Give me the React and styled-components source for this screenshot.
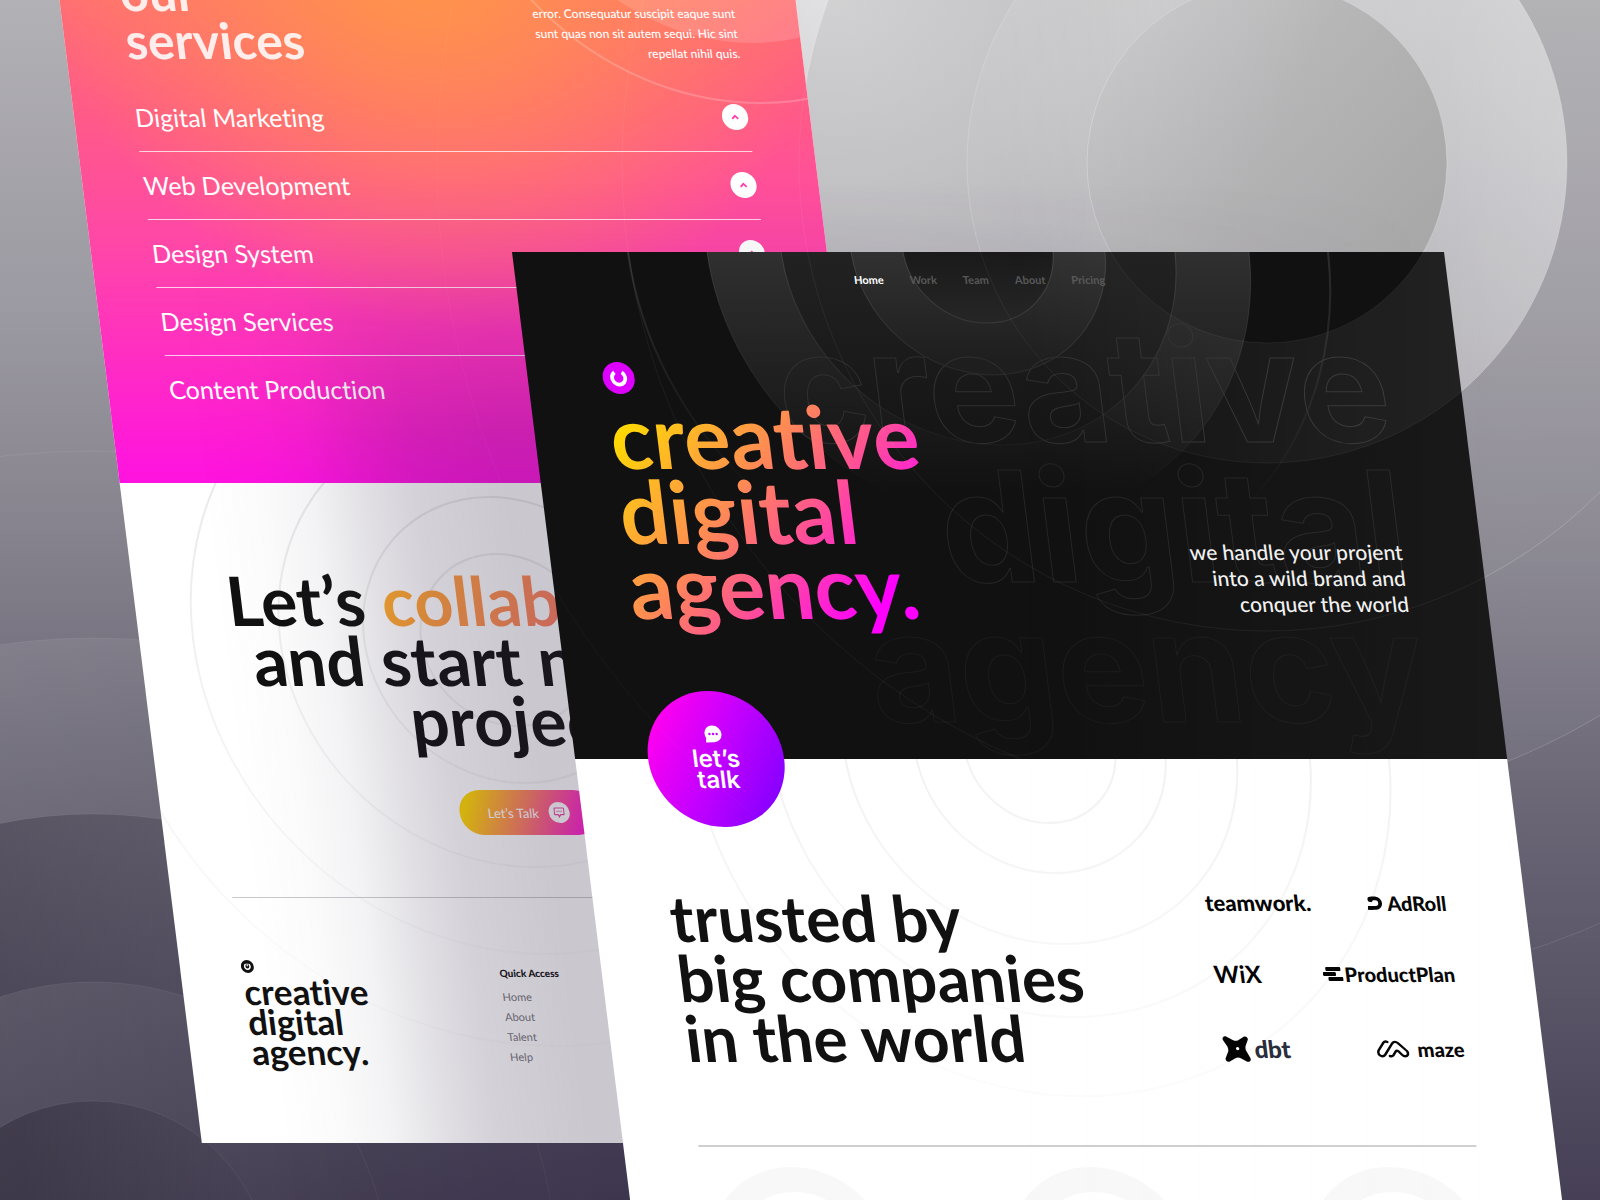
import React from "react";
import styled, { createGlobalStyle } from "styled-components";

const BODY_FONT = `Lato, "Open Sans", sans-serif`;
const GROTESK = `Inter, "Liberation Sans", sans-serif`;
const SLANT = "7.1deg";
const INK = "#111111";

const GlobalStyle = createGlobalStyle`
  *, *::before, *::after { box-sizing: border-box; }
  body {
    margin: 0;
    font-family: ${BODY_FONT};
    font-variant-ligatures: none;
    color: ${INK};
    background: #474056;
  }
  h1, h2, p, ul { margin: 0; padding: 0; }
  ul { list-style: none; }
  a { color: inherit; text-decoration: none; }
  button { font: inherit; border: 0; padding: 0; cursor: pointer; }
`;

const Scene = styled.main`
  position: relative;
  min-height: 100vh;
  overflow: hidden;
  background:
    radial-gradient(circle at 52% 0%, rgba(255, 255, 255, 0.6), rgba(255, 255, 255, 0) 42%),
    linear-gradient(180deg, #b2b1b5 0%, #9c9aa2 25%, #85828d 45%, #676372 66%, #4d485c 88%, #403950 100%);
`;

const SceneArt = styled.svg`
  position: absolute;
  inset: 0;
  width: 100%;
  height: 100%;
  pointer-events: none;
`;

const Sheet = styled.article`
  position: absolute;
  transform: skewX(${SLANT});
  transform-origin: 0 0;
`;

const BackSheet = styled(Sheet)`
  top: -60px;
  left: 52px;
  width: 46%;
  background: #ffffff;
`;

const FrontSheet = styled(Sheet)`
  top: 252px;
  left: 32%;
  width: calc(58% + 4px);

  &::before {
    content: "";
    position: absolute;
    z-index: -1;
    top: -70px;
    bottom: -100px;
    left: -340px;
    right: 0;
    background: linear-gradient(
      90deg,
      rgba(50, 40, 70, 0),
      rgba(50, 40, 70, 0.02) 60px,
      rgba(50, 40, 70, 0.06) 110px,
      rgba(50, 40, 70, 0.15) 165px,
      rgba(50, 40, 70, 0.21) 215px,
      rgba(50, 40, 70, 0.26) 306px,
      rgba(50, 40, 70, 0.26) 50%,
      rgba(50, 40, 70, 0)
    );
    mask-image: linear-gradient(180deg, transparent, rgba(0, 0, 0, 0.2) 80px, #000 250px);
  }
`;

const SheetArt = styled.svg`
  position: absolute;
  top: ${(p) => p.$top || "0"};
  left: 50%;
  margin-left: -500px;
  width: 1000px;
  height: 1000px;
  overflow: visible;
  pointer-events: none;
`;

/* services */

const Services = styled.section`
  position: relative;
  overflow: hidden;
  padding: 28px 62px 59px 61px;
  color: #ffffff;
  background:
    radial-gradient(circle at 50% 0%, rgba(255, 146, 76, 1) 8%, rgba(255, 146, 76, 0) 60%),
    linear-gradient(180deg, #ff7270 6%, #ff5a88 32%, #ff48a6 55%, #ff2cc4 78%, #ff12e0 100%);
`;

const CornerArt = styled.svg`
  position: absolute;
  top: 0;
  right: 0;
  width: 400px;
  height: 240px;
  overflow: visible;
`;

const ServicesHead = styled.header`
  position: relative;
  display: flex;
  justify-content: space-between;
  align-items: flex-end;
  margin-bottom: 20px;
`;

const ServicesTitle = styled.h2`
  font-size: 50px;
  line-height: 48px;
  font-weight: 700;
  color: rgba(255, 255, 255, 0.87);
`;

const ServicesNote = styled.p`
  font-size: 12px;
  line-height: 20px;
  font-weight: 500;
  text-align: right;
  color: #ffffff;
`;

const ServiceRow = styled.li`
  display: flex;
  justify-content: space-between;
  align-items: center;
  height: 68px;
  padding-bottom: 2px;
  font-size: 25px;
  line-height: 32px;
  border-bottom: 1px solid rgba(255, 255, 255, 0.75);
  &:last-child { border-bottom: 0; }
`;

const Toggle = styled.button`
  display: grid;
  place-items: center;
  width: 26px;
  height: 26px;
  border-radius: 50%;
  background: #ffffff;
  color: #ff3fae;
`;

/* collaborate */

const LightArea = styled.div`
  position: relative;
  overflow: hidden;
`;

const Collaborate = styled.section`
  position: relative;
  display: flex;
  flex-direction: column;
  align-items: center;
  margin: 0 61px;
  padding: 87px 0 62px;
  border-bottom: 1px solid #c9c9cc;
`;

const BigTitle = styled.h2`
  font-size: ${(p) => (p.$centered ? "68px" : "64px")};
  line-height: 60px;
  font-weight: 700;
  white-space: nowrap;
  text-align: ${(p) => (p.$centered ? "center" : "left")};
`;

const Glow = styled.span`
  color: transparent;
  background: linear-gradient(115deg, #ffb024, #ff7a6a 60%, #ff2fc0);
  -webkit-background-clip: text;
  background-clip: text;
`;

const TalkButton = styled.button`
  display: flex;
  align-items: center;
  gap: 10px;
  height: 45px;
  margin-top: 40px;
  padding: 0 28px;
  border-radius: 22px;
  font-size: 13px;
  color: #ffffff;
  background: linear-gradient(110deg, #ffd800 8%, #ff7a6a 50%, #ff20d0 88%);
`;

const TalkDot = styled.span`
  display: grid;
  place-items: center;
  width: 21px;
  height: 21px;
  border-radius: 50%;
  background: #ffffff;
  color: #f04aa8;
`;

const Footer = styled.footer`
  position: relative;
  display: grid;
  grid-template-columns: 42% 1fr;
  margin: 0 61px;
  padding: 62px 0 76px;
`;

const FooterBrand = styled.p`
  margin-top: 3px;
  font-size: 35px;
  line-height: 30px;
  font-weight: 700;
`;

const QuickAccess = styled.nav`
  padding-top: 5px;
  font-size: 11px;
  line-height: 20px;
  color: #77767c;
`;

const QuickTitle = styled.p`
  margin-bottom: 6px;
  font-size: 10px;
  line-height: 16px;
  font-weight: 900;
  color: ${INK};
`;

/* hero */

const Hero = styled.section`
  position: relative;
  padding: 0 79px 136px 75px;
  background: ${INK};
  color: #ffffff;
`;

const HeroArt = styled.div`
  position: absolute;
  inset: 0;
  overflow: hidden;
`;

const GhostWords = styled.p`
  position: absolute;
  top: 64px;
  right: 72px;
  font-family: ${GROTESK};
  font-size: 154px;
  line-height: 140px;
  font-weight: 700;
  text-align: right;
  color: transparent;
`;

const GhostLine = styled.span`
  display: block;
  -webkit-text-stroke: 1px ${(p) => p.$tone};
`;

const TopNav = styled.nav`
  position: relative;
  display: flex;
  justify-content: center;
  gap: 26px;
  padding-top: 18px;
  margin-bottom: 72px;
  font-size: 11px;
  line-height: 20px;
  font-weight: 700;
`;

const TopLink = styled.a`
  color: ${(p) => (p.$active ? "#ffffff" : "#585858")};
`;

const HeroBody = styled.div`
  position: relative;
  display: flex;
  justify-content: space-between;
  align-items: flex-end;
`;

const HeroTitle = styled.h1`
  margin: 4px 0 -20px;
  padding-bottom: 20px;
  font-size: 87px;
  line-height: 75px;
  font-weight: 700;
  color: transparent;
  background: linear-gradient(130deg, #ffdc00 6%, #ff8c52 38%, #ff5590 56%, #ff00ff 82%);
  -webkit-background-clip: text;
  background-clip: text;
`;

const HeroNote = styled.p`
  padding-bottom: 6px;
  font-size: 21px;
  line-height: 26px;
  font-weight: 500;
  text-align: right;
  color: #f2f2f2;
`;

const TalkBadge = styled.button`
  position: absolute;
  z-index: 1;
  left: 73px;
  bottom: -68px;
  display: flex;
  flex-direction: column;
  align-items: center;
  justify-content: center;
  gap: 5px;
  width: 136px;
  height: 136px;
  padding-bottom: 4px;
  border-radius: 50%;
  color: #ffffff;
  background: linear-gradient(120deg, #ff00f0 12%, #c400ff 50%, #8a00ff 86%);
`;

const BadgeText = styled.span`
  font-family: ${GROTESK};
  font-size: 24px;
  line-height: 21px;
  font-weight: 600;
`;

/* trusted */

const Trusted = styled.section`
  position: relative;
  overflow: hidden;
  padding: 0 79px 0 75px;
  background: #ffffff;
`;

const TrustedRow = styled.div`
  position: relative;
  display: flex;
  justify-content: space-between;
  align-items: flex-start;
  padding: 129px 0 77px;
  border-bottom: 2px solid #cfcfcf;
`;

const LogoWall = styled.ul`
  display: flex;
  flex-direction: column;
  gap: 41px;
  width: 241px;
`;

const LogoLine = styled.li`
  display: flex;
  justify-content: space-between;
  align-items: center;
  height: 30px;
  &:last-child { height: 38px; }
`;

const Logo = styled.a`
  display: flex;
  align-items: center;
  gap: ${(p) => p.$gap || "4px"};
  font-size: ${(p) => p.$size || "20px"};
  line-height: 24px;
  font-weight: ${(p) => p.$weight || 900};
  color: ${(p) => p.$tone || "#000000"};
`;

const RingRow = styled.div`
  display: flex;
  justify-content: space-between;
  height: 54px;
  padding-top: 20px;
`;

const Ring = styled.span`
  width: 180px;
  height: 180px;
  border-radius: 50%;
  border: 25px solid #f8f8f8;
`;

function SceneCircles() {
  return (
    <SceneArt viewBox="0 0 1600 1200" preserveAspectRatio="xMidYMid slice" aria-hidden="true">
      <defs>
        <linearGradient id="inner" x1="0" y1="0.2" x2="1" y2="0.7">
          <stop offset="0" stopColor="#b8b8b8" stopOpacity="0.1" />
          <stop offset="0.5" stopColor="#aaaaaa" stopOpacity="0.6" />
          <stop offset="1" stopColor="#a2a2a2" stopOpacity="0.8" />
        </linearGradient>
        <linearGradient id="ring" x1="0" y1="0.4" x2="1" y2="0">
          <stop offset="0" stopColor="#ffffff" stopOpacity="0.03" />
          <stop offset="0.7" stopColor="#ffffff" stopOpacity="0.34" />
          <stop offset="1" stopColor="#ffffff" stopOpacity="0.46" />
        </linearGradient>
        <linearGradient id="wide" x1="0" y1="0" x2="0.6" y2="1">
          <stop offset="0.3" stopColor="#9a9a9a" stopOpacity="0.22" />
          <stop offset="1" stopColor="#9a9a9a" stopOpacity="0.08" />
        </linearGradient>
        <linearGradient id="darkdisc" x1="0.3" y1="0" x2="1" y2="0">
          <stop offset="0" stopColor="#120e1c" stopOpacity="0.28" />
          <stop offset="1" stopColor="#120e1c" stopOpacity="0" />
        </linearGradient>
        <linearGradient id="lightdisc" x1="0.2" y1="0" x2="1" y2="0">
          <stop offset="0" stopColor="#fff" stopOpacity="0.1" />
          <stop offset="1" stopColor="#fff" stopOpacity="0" />
        </linearGradient>
      </defs>
      <circle cx="1267" cy="163" r="830" fill="none" stroke="#fff" strokeOpacity="0.08" />
      <circle cx="1267" cy="163" r="645" fill="#fff" fillOpacity="0.04" stroke="#fff" strokeOpacity="0.12" />
      <circle cx="1267" cy="163" r="468" fill="url(#wide)" stroke="#fff" strokeOpacity="0.14" />
      <circle cx="1267" cy="163" r="300" fill="url(#ring)" stroke="#fff" strokeOpacity="0.12" />
      <circle cx="1267" cy="163" r="180" fill="url(#inner)" stroke="#fff" strokeOpacity="0.2" />
      <circle cx="93" cy="1278" r="827" fill="none" stroke="#fff" strokeOpacity="0.07" />
      <circle cx="93" cy="1278" r="640" fill="url(#lightdisc)" stroke="#fff" strokeOpacity="0.06" />
      <circle cx="93" cy="1278" r="464" fill="url(#darkdisc)" stroke="#fff" strokeOpacity="0.06" />
      <circle cx="93" cy="1278" r="296" fill="url(#lightdisc)" stroke="#fff" strokeOpacity="0.06" />
      <circle cx="93" cy="1278" r="177" fill="url(#darkdisc)" stroke="#fff" strokeOpacity="0.06" />
    </SceneArt>
  );
}

function GlassCircles() {
  return (
    <SceneArt viewBox="0 0 1600 1200" preserveAspectRatio="xMidYMid slice" aria-hidden="true">
      <defs>
        <linearGradient id="glass" gradientUnits="userSpaceOnUse" x1="1000" y1="0" x2="1500" y2="0">
          <stop offset="0" stopColor="#fff" stopOpacity="0" />
          <stop offset="1" stopColor="#fff" stopOpacity="0.08" />
        </linearGradient>
        <linearGradient id="haze" gradientUnits="userSpaceOnUse" x1="1000" y1="0" x2="1500" y2="0">
          <stop offset="0" stopColor="#fff" stopOpacity="0" />
          <stop offset="1" stopColor="#fff" stopOpacity="0.035" />
        </linearGradient>
        <mask id="donut">
          <circle cx="1267" cy="163" r="300" fill="#fff" />
          <circle cx="1267" cy="163" r="180" fill="#000" />
        </mask>
        <mask id="outer">
          <rect width="1600" height="1200" fill="#fff" />
          <circle cx="1267" cy="163" r="300" fill="#000" />
        </mask>
      </defs>
      <rect width="1600" height="1200" fill="url(#glass)" mask="url(#donut)" />
      <rect width="1600" height="1200" fill="url(#haze)" mask="url(#outer)" />
      <circle cx="1267" cy="163" r="830" fill="none" stroke="#fff" strokeOpacity="0.03" />
      <circle cx="1267" cy="163" r="645" fill="none" stroke="#fff" strokeOpacity="0.05" />
      <circle cx="1267" cy="163" r="468" fill="none" stroke="#fff" strokeOpacity="0.06" />
      <circle cx="1267" cy="163" r="300" fill="none" stroke="#fff" strokeOpacity="0.06" />
      <circle cx="1267" cy="163" r="180" fill="none" stroke="#fff" strokeOpacity="0.06" />
    </SceneArt>
  );
}

function Rings({ id, top, radii, strength }) {
  return (
    <SheetArt viewBox="-500 -500 1000 1000" $top={top} aria-hidden="true">
      <defs>
        <linearGradient id={id} gradientUnits="userSpaceOnUse" x1="0" y1="-150" x2="0" y2="330">
          <stop offset="0" stopColor="#1a1a24" stopOpacity={strength} />
          <stop offset="1" stopColor="#1a1a24" stopOpacity="0.015" />
        </linearGradient>
      </defs>
      {radii.map((r) => (
        <circle key={r} r={r} fill="none" stroke={`url(#${id})`} strokeWidth="2" />
      ))}
    </SheetArt>
  );
}

function HeroRings() {
  const bands = [
    [271, "#303030", "#111111"],
    [197, "#222222", "#161616"],
    [127, "#323232", "#1e1e1e"],
    [75, "#191919", "#262626"],
  ];
  return (
    <SheetArt viewBox="-500 -500 1000 1000" $top="-504px" aria-hidden="true">
      <defs>
        {bands.map(([r, from, to]) => (
          <linearGradient key={r} id={`band${r}`} gradientUnits="userSpaceOnUse" x1="0" y1="0" x2="0" y2={r === 75 ? 75 : r * 0.9}>
            <stop offset="0" stopColor={from} />
            <stop offset="1" stopColor={to} />
          </linearGradient>
        ))}
        <linearGradient id="bandline" gradientUnits="userSpaceOnUse" x1="0" y1="0" x2="0" y2="260">
          <stop offset="0" stopColor="#fff" stopOpacity="0.12" />
          <stop offset="1" stopColor="#fff" stopOpacity="0" />
        </linearGradient>
      </defs>
      <circle r="350" fill="none" stroke="url(#bandline)" strokeWidth="2" />
      {bands.map(([r]) => (
        <circle key={r} r={r} fill={`url(#band${r})`} stroke="url(#bandline)" />
      ))}
    </SheetArt>
  );
}

const MarkSvg = styled.svg`
  display: block;
`;

function Mark({ size, disc, tick }) {
  return (
    <MarkSvg width={size} height={size} viewBox="0 0 32 32" aria-hidden="true">
      <circle cx="16" cy="16" r="16" fill={disc} />
      <path d="M12.4 10.4 A6.6 6.6 0 1 0 19.6 10.4" fill="none" stroke="#fff" strokeWidth="3.8" />
      {tick && <path d="M16 8.4 v7" stroke="#fff" strokeWidth="3" />}
    </MarkSvg>
  );
}

const Chevron = () => (
  <svg width="8" height="8" viewBox="0 0 8 8" fill="none" stroke="currentColor" strokeWidth="1.8" aria-hidden="true">
    <path d="M1 5.8 L4 2.8 L7 5.8" />
  </svg>
);

const AdRollMark = () => (
  <svg width="16" height="14" viewBox="0 0 16 14" fill="none" aria-hidden="true">
    <path d="M1 11.8 H8 A4.6 4.6 0 0 0 8.6 2.4 H4" stroke="#000" strokeWidth="3.8" />
    <circle cx="3.4" cy="3.4" r="2.6" fill="#000" />
    <path d="M0.5 9.9 h5 v3.8 h-5.5z" fill="#000" />
  </svg>
);

const PlanMark = () => (
  <svg width="20" height="14" viewBox="0 0 20 14" fill="#000" aria-hidden="true">
    <rect x="3" y="0" width="15" height="4" rx="1" />
    <rect x="0" y="5" width="13" height="4" rx="1" />
    <rect x="5" y="10" width="15" height="4" rx="1" />
  </svg>
);

const DbtMark = () => (
  <svg width="27" height="26" viewBox="0 0 27 26" aria-hidden="true">
    <path
      d="M1 1.6 C2 .3 3.4 0 4.8 .8 L11 4.2 Q13.5 5.2 16 4.2 L21.5 1 C23.5 -.2 26 1 25.8 3.4 L22.6 10.2 Q21.8 13 23 15.6 L26 22 C27 24.6 24.4 26.6 22 25.4 L16.4 22.2 Q13.8 21 11 22.2 L5 25.4 C2.6 26.4 .6 24.4 1.2 22.2 L4.6 15.6 Q5.4 13 4.4 10.4 L1 4.6 C.4 3.4 .4 2.4 1 1.6 Z"
      fill="#000"
    />
    <circle cx="14.4" cy="12.6" r="1.7" fill="#fff" />
  </svg>
);

const MazeMark = () => (
  <svg width="33" height="18" viewBox="0 0 33 18" fill="none" stroke="#000" strokeWidth="2.4" strokeLinecap="round" strokeLinejoin="round" aria-hidden="true">
    <path d="M12 2 Q9.6 .6 7.8 2.8 L2.2 10.4 Q.6 13.6 3.2 15.6 Q6 17.4 8.2 14.8 L16.4 3.6 Q19.4 .2 22.6 3.4 L30.4 11 Q32.4 14 29.6 16 Q27 17 25 14.8 L22 11.4 Q20.4 10 19 11.6 L16.4 15.2 Q15 16.8 12.8 16" />
  </svg>
);

const BubbleIcon = () => (
  <svg width="18" height="18" viewBox="0 0 18 18" aria-hidden="true">
    <path d="M9 .5 A8.4 8.4 0 1 1 9 17.3 L1 17.4 L1.6 13 A8.4 8.4 0 0 1 9 .5 Z" fill="#fff" />
    <circle cx="5.4" cy="9" r="1.2" fill="#c400ff" />
    <circle cx="9" cy="9" r="1.2" fill="#c400ff" />
    <circle cx="12.6" cy="9" r="1.2" fill="#c400ff" />
  </svg>
);

const ChatIcon = () => (
  <svg width="11" height="11" viewBox="0 0 11 11" fill="none" stroke="currentColor" strokeWidth="1.2" aria-hidden="true">
    <path d="M1.5 1 H9.5 Q10.3 1 10.3 1.8 V6.9 Q10.3 7.7 9.5 7.7 H6.8 L5.2 9.8 L4.4 7.7 H1.5 Q.7 7.7 .7 6.9 V1.8 Q.7 1 1.5 1 Z" />
    <path d="M3 4.3 H8" strokeDasharray="1 1" />
  </svg>
);

const SERVICES = ["Digital Marketing", "Web Development", "Design System", "Design Services", "Content Production"];
const NAV = ["Home", "Work", "Team", "About", "Pricing"];
const QUICK = ["Home", "About", "Talent", "Help"];

export default function App() {
  return (
    <>
      <GlobalStyle />
      <Scene>
        <SceneCircles />
        <BackSheet>
          <Services>
            <CornerArt viewBox="0 0 400 240" aria-hidden="true">
              <circle cx="352" cy="-115" r="218" fill="#fff" fillOpacity="0.14" />
              <circle cx="352" cy="-115" r="278" fill="none" stroke="#fff" strokeOpacity="0.2" strokeWidth="2" />
            </CornerArt>
            <ServicesHead>
              <ServicesTitle>
                our
                <br />
                services
              </ServicesTitle>
              <ServicesNote>
                error. Consequatur suscipit eaque sunt
                <br />
                sunt quas non sit autem sequi. Hic sint
                <br />
                repellat nihil quis.
              </ServicesNote>
            </ServicesHead>
            <ul>
              {SERVICES.map((name) => (
                <ServiceRow key={name}>
                  {name}
                  <Toggle type="button" aria-label={`Toggle ${name}`}>
                    <Chevron />
                  </Toggle>
                </ServiceRow>
              ))}
            </ul>
          </Services>
          <LightArea>
            <Rings id="ripple" top="-343px" radii={[86, 143, 227, 314, 406]} strength="0.09" />
            <Collaborate>
              <BigTitle $centered>
                Let’s <Glow>collaborate</Glow> it
                <br />
                and start new art
                <br />
                project
              </BigTitle>
              <TalkButton type="button">
                Let’s Talk
                <TalkDot>
                  <ChatIcon />
                </TalkDot>
              </TalkButton>
            </Collaborate>
            <Footer>
              <div>
                <Mark size={13} disc={INK} tick />
                <FooterBrand>
                  creative
                  <br />
                  digital
                  <br />
                  agency.
                </FooterBrand>
              </div>
              <QuickAccess aria-label="Quick Access">
                <QuickTitle>Quick Access</QuickTitle>
                <ul>
                  {QUICK.map((name) => (
                    <li key={name}>
                      <a href="#">{name}</a>
                    </li>
                  ))}
                </ul>
              </QuickAccess>
            </Footer>
          </LightArea>
        </BackSheet>

        <FrontSheet>
          <Hero>
            <HeroArt aria-hidden="true">
              <HeroRings />
              <GhostWords>
                <GhostLine $tone="#303030">creative</GhostLine>
                <GhostLine $tone="#252525">digital</GhostLine>
                <GhostLine $tone="#1c1c1c">agency</GhostLine>
              </GhostWords>
            </HeroArt>
            <TopNav aria-label="Main">
              {NAV.map((name, i) => (
                <TopLink key={name} href="#" $active={i === 0}>
                  {name}
                </TopLink>
              ))}
            </TopNav>
            <HeroBody>
              <div>
                <Mark size={32} disc="#dd00ff" />
                <HeroTitle>
                  creative
                  <br />
                  digital
                  <br />
                  agency.
                </HeroTitle>
              </div>
              <HeroNote>
                we handle your projent
                <br />
                into a wild brand and
                <br />
                conquer the world
              </HeroNote>
            </HeroBody>
            <TalkBadge type="button">
              <BubbleIcon />
              <BadgeText>
                let’s
                <br />
                talk
              </BadgeText>
            </TalkBadge>
          </Hero>
          <Trusted>
            <Rings id="echo" top="-511px" radii={[75, 125, 196, 269, 348]} strength="0.08" />
            <TrustedRow>
              <BigTitle>
                trusted by
                <br />
                big companies
                <br />
                in the world
              </BigTitle>
              <LogoWall>
                <LogoLine>
                  <Logo href="#" $size="22px">teamwork.</Logo>
                  <Logo href="#"><AdRollMark />AdRoll</Logo>
                </LogoLine>
                <LogoLine>
                  <Logo href="#" $size="24px" $weight={700}>WiX</Logo>
                  <Logo href="#" $gap="2px"><PlanMark />ProductPlan</Logo>
                </LogoLine>
                <LogoLine>
                  <Logo href="#" $size="24px" $tone="#262a38"><DbtMark />dbt</Logo>
                  <Logo href="#" $gap="8px"><MazeMark />maze</Logo>
                </LogoLine>
              </LogoWall>
            </TrustedRow>
            <RingRow aria-hidden="true">
              <Ring />
              <Ring />
              <Ring />
            </RingRow>
          </Trusted>
        </FrontSheet>
        <GlassCircles />
      </Scene>
    </>
  );
}
